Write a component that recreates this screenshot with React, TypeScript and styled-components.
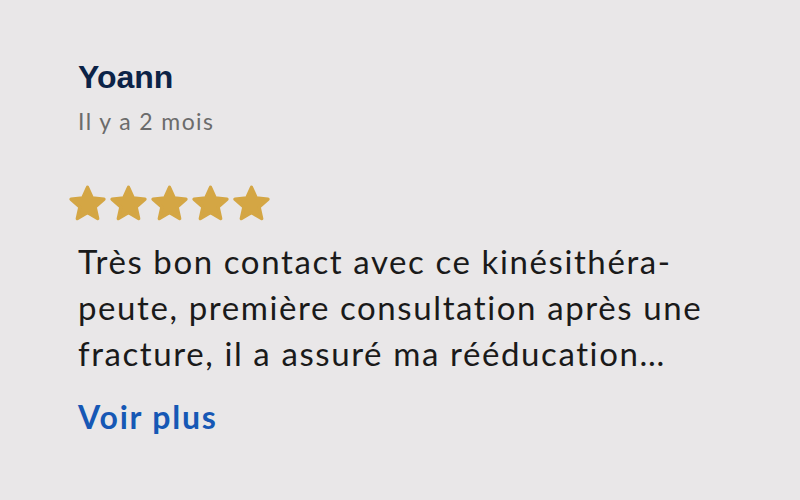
import React from 'react'
import styled, { createGlobalStyle } from 'styled-components'

const GlobalStyle = createGlobalStyle`
  html, body {
    margin: 0;
    padding: 0;
    background: #e9e7e8;
  }
`

const review = {
  author: 'Yoann',
  date: 'Il y a 2 mois',
  rating: 5,
  lines: [
    'Très bon contact avec ce kinésithéra-',
    'peute, première consultation après une',
    'fracture, il a assuré ma rééducation…',
  ],
}

const Star = () => (
  <svg width="41" height="39" viewBox="0 0 24 23">
    <path
      d="M12 1.4 L14.8 7.7 L21.7 8.4 L16.5 13 L18 19.8 L12 16.3 L6 19.8 L7.5 13 L2.3 8.4 L9.2 7.7 Z"
      fill="#d4a644"
      stroke="#d4a644"
      strokeWidth="2"
      strokeLinejoin="round"
    />
  </svg>
)

const App = () => {
  return (
    <>
      <GlobalStyle />
      <Card>
        <Author>{review.author}</Author>
        <Date>{review.date}</Date>
        <Stars>
          {Array.from({ length: review.rating }).map((_, i) => (
            <Star key={i} />
          ))}
        </Stars>
        <Body>
          {review.lines.map((l, i) => (
            <Line key={i}>{l}</Line>
          ))}
        </Body>
        <More>Voir plus</More>
      </Card>
    </>
  )
}

export default App

const Card = styled.div`
  width: 800px;
  height: 500px;
  box-sizing: border-box;
  padding: 59px 0 0 78px;
  display: flex;
  flex-direction: column;
  background: #e9e7e8;
`
const Author = styled.div`
  font-family: 'Liberation Sans', Arial, sans-serif;
  font-weight: 700;
  font-size: 32px;
  line-height: 36px;
  color: #0c2347;
`
const Date = styled.div`
  margin-top: 12px;
  font-family: Lato, 'Noto Sans', sans-serif;
  font-size: 23px;
  letter-spacing: 1.4px;
  line-height: 28px;
  color: #6b6b6b;
`
const Stars = styled.div`
  display: flex;
  gap: 0;
  margin: 50px 0 0 -11px;
`
const Body = styled.div`
  margin-top: 14px;
  font-family: Lato, 'Noto Sans', sans-serif;
  font-size: 33px;
  letter-spacing: 1.6px;
  line-height: 46px;
  color: #1a1a1a;
`
const Line = styled.div`
  white-space: nowrap;
`
const More = styled.div`
  margin-top: 21px;
  font-family: Lato, 'Noto Sans', sans-serif;
  font-weight: 700;
  font-size: 32px;
  letter-spacing: 1.8px;
  line-height: 40px;
  color: #1658b5;
`
